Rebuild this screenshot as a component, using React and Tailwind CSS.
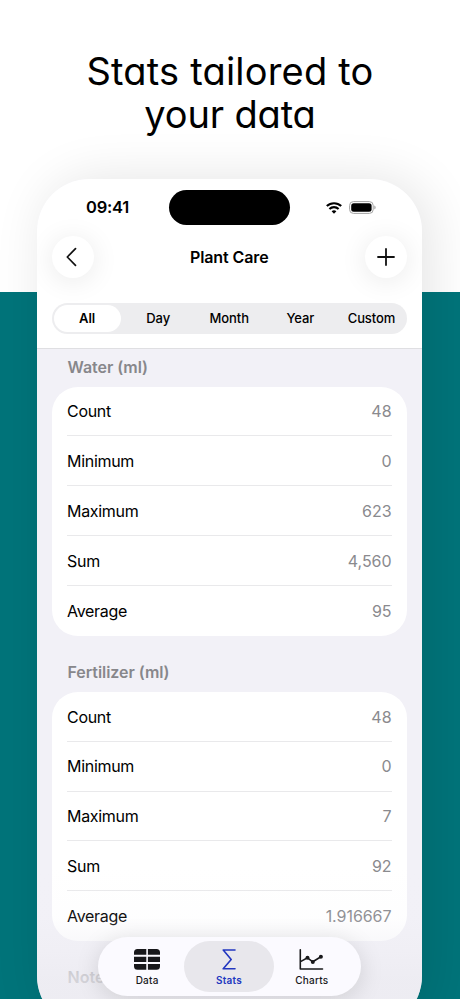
import React from "react";

const water = [["Count", "48"], ["Minimum", "0"], ["Maximum", "623"], ["Sum", "4,560"], ["Average", "95"]];
const fertilizer = [["Count", "48"], ["Minimum", "0"], ["Maximum", "7"], ["Sum", "92"], ["Average", "1.916667"]];

function StatusBar() {
  return (
    <div className="flex h-[57px] items-center pl-[49.5px] pr-[46px]">
      <span className="w-[83px] text-[16.5px] font-semibold tracking-[-0.25px]">09:41</span>
      <div className="h-[35px] w-[121px] rounded-full bg-black" />
      <svg className="ml-auto" width="16" height="12" viewBox="0 0 16 12" fill="none" stroke="#000" strokeWidth="2.1">
        <path d="M0.8 4.1a10.4 10.4 0 0 1 14.4 0" />
        <path d="M3.4 7a6.6 6.6 0 0 1 9.2 0" />
        <path d="M8 11.7 5.6 9.3a3.5 3.5 0 0 1 4.8 0Z" fill="#000" stroke="none" />
      </svg>
      <svg className="ml-[7px]" width="27" height="13" viewBox="0 0 27 13">
        <rect x=".6" y=".6" width="23.6" height="11.8" rx="3.8" fill="none" stroke="#a3a3a3" />
        <rect x="2.2" y="2.2" width="20.4" height="8.6" rx="2.5" fill="#000" />
        <path d="M25.3 4.6v3.8c.8-.3 1.3-1 1.3-1.9s-.5-1.6-1.3-1.9Z" fill="#a3a3a3" />
      </svg>
    </div>
  );
}

function RoundButton({ children }) {
  return (
    <button className="flex size-[42px] items-center justify-center rounded-full bg-white shadow-[0_3px_28px_rgba(0,0,0,0.09)]">
      {children}
    </button>
  );
}

function Card({ rows, firstRow }) {
  return (
    <div className="mx-[15px] flex h-[249px] flex-col rounded-[26px] bg-white px-[15.5px]">
      {rows.map(([label, value], i) => (
        <div
          key={label}
          className={
            "flex items-center justify-between text-[16px] " +
            (i === 0 ? firstRow + " border-b border-[#e9e9eb]" : i < 4 ? "h-[50px] border-b border-[#e9e9eb]" : "h-[50px] shrink-0")
          }
        >
          <span className="tracking-[-0.3px]">{label}</span>
          <span className="tracking-[-0.05px] text-[#8a8a8e]">{value}</span>
        </div>
      ))}
    </div>
  );
}

function TabBar() {
  return (
    <nav className="absolute left-[61px] top-[758px] flex h-[59px] w-[263px] rounded-full bg-[#fbfaff] p-1 text-[10px] font-medium tracking-[0.25px] text-[#18181b] shadow-[0_4px_24px_rgba(0,0,0,0.13)]">
      <div className="ml-px flex w-[90px] flex-col items-center pt-2">
        <svg width="26" height="21" viewBox="0 0 26 21" fill="#18181b">
          <path d="M3.5 0H12.300v5.800H0V3.5A3.5 3.5 0 0 1 3.5 0ZM13.900 0h8.600a3.500 3.500 0 0 1 3.500 3.500v2.300H13.900ZM0 7.700h12.300v5.300H0ZM13.900 7.700h12.100v5.300H13.900ZM0 14.900h12.300v5.800H3.500A3.500 3.500 0 0 1 0 17.200ZM13.900 14.900h12.100v2.300a3.500 3.500 0 0 1-3.500 3.500H13.900Z" />
        </svg>
        <span className="mt-[3px] leading-[15px]">Data</span>
      </div>
      <div className="-ml-[8px] flex w-[91px] flex-col items-center rounded-full bg-[#e8e7ec] pt-2 text-[#2237c0]">
        <svg width="14" height="21" viewBox="0 0 14 21" fill="none" stroke="currentColor" strokeWidth="1.6" strokeLinecap="round" strokeLinejoin="round">
          <path d="M13 1H1.200l8 9.400L1.200 19.800H13" />
        </svg>
        <span className="mt-[3px] font-semibold leading-[15px]">Stats</span>
      </div>
      <div className="-ml-[7px] flex w-[90px] flex-col items-center pt-2">
        <svg width="25" height="21" viewBox="0 0 25 21" fill="none" stroke="#18181b" strokeWidth="1.6" strokeLinecap="round" strokeLinejoin="round">
          <path d="M1.300.8v19.200h22.200M2 12.400l6.500-3.600 5.300 4 8.100-5" />
          <g fill="#18181b" stroke="none">
            <circle cx="8.500" cy="8.700" r="2" />
            <circle cx="13.800" cy="12.900" r="2" />
            <circle cx="21.900" cy="7.700" r="2" />
          </g>
        </svg>
        <span className="mt-[3px] leading-[15px]">Charts</span>
      </div>
    </nav>
  );
}

export default function App() {
  return (
    <div className="h-[999px] w-[460px] overflow-hidden bg-[linear-gradient(to_bottom,#fff_0,#fff_292.500px,#00747a_292.500px)] font-['Inter',sans-serif] text-black">
      <h1 className="flex h-[179px] flex-col items-center pt-[49px] text-[38px] font-normal leading-[44px] [font-feature-settings:'cv11']">
        <span className="tracking-[0.2px]">Stats tailored to</span>
        <span className="-mt-px tracking-[-0.15px]">your data</span>
      </h1>
      <main className="relative ml-[36.500px] h-[849px] w-[385.500px] overflow-hidden rounded-[52px] bg-[#f2f1f7] shadow-[8px_0_52px_rgba(0,0,0,0.11)]">
        <header className="h-[170px] border-b border-[#dfdfe2] bg-white">
          <StatusBar />
          <div className="flex h-[42px] items-center justify-between px-[15px]">
            <RoundButton>
              <svg className="-ml-1" width="12" height="20" viewBox="0 0 12 20" fill="none" stroke="#111" strokeWidth="1.700" strokeLinecap="round" strokeLinejoin="round">
                <path d="M10.500 1.700 2.300 10l8.200 8.300" />
              </svg>
            </RoundButton>
            <h2 className="text-[16px] font-semibold tracking-[-0.1px]">Plant Care</h2>
            <RoundButton>
              <svg width="18" height="18" viewBox="0 0 18 18" stroke="#111" strokeWidth="1.800" strokeLinecap="round">
                <path d="M9 1v16M1 9h16" />
              </svg>
            </RoundButton>
          </div>
          <div className="mx-[15px] mt-[25px] grid h-[31px] grid-cols-5 items-center rounded-full bg-[#ededef] text-center text-[13px] font-medium tracking-[-0.1px]">
            <span className="m-[2px] flex h-[27px] items-center justify-center rounded-full bg-white font-semibold">All</span>
            <span>Day</span>
            <span>Month</span>
            <span>Year</span>
            <span>Custom</span>
          </div>
        </header>
        <h3 className="flex h-[38px] items-center pb-[2px] pl-[31px] text-[16px] font-semibold tracking-[-0.05px] text-[#87878b]">Water (ml)</h3>
        <Card rows={water} firstRow="h-[49px]" />
        <h3 className="flex h-[56px] items-center pl-[31px] pt-[15px] text-[16px] font-semibold tracking-[-0.05px] text-[#87878b]">Fertilizer (ml)</h3>
        <Card rows={fertilizer} firstRow="h-[50px] shrink-0" />
        <h3 className="flex h-[56px] items-center pl-[31px] pt-[16px] text-[16px] font-semibold text-[#87878b]">Notes</h3>
        <div className="pointer-events-none absolute inset-x-0 bottom-0 h-[160px] bg-[linear-gradient(to_bottom,rgba(240,239,245,0)_0,rgba(240,239,245,0.08)_50px,rgba(238,237,243,0.45)_80px,rgba(236,235,241,0.75)_110px,rgba(236,235,241,0.85)_160px)]" />
        <TabBar />
      </main>
    </div>
  );
}
